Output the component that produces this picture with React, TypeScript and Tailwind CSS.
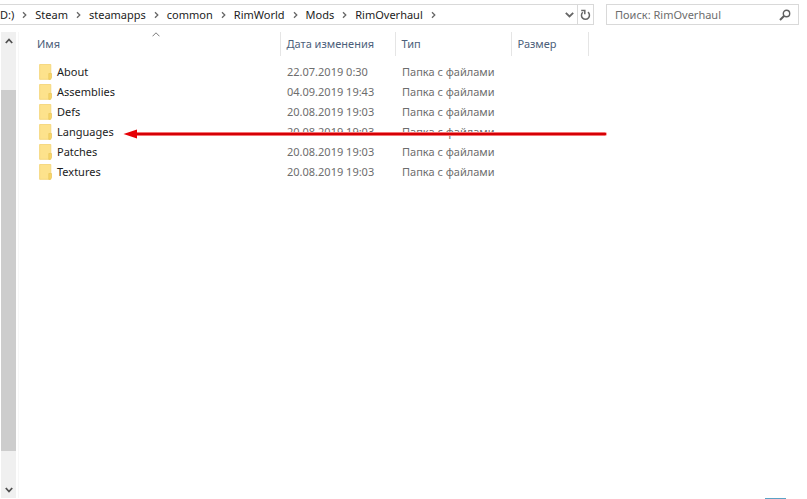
import React from 'react';

type FolderType = {
	name: string;
	date: string;
	marked?: boolean;
};

const path = ['D:)', 'Steam', 'steamapps', 'common', 'RimWorld', 'Mods', 'RimOverhaul'];

const folders: FolderType[] = [
	{name: 'About', date: '22.07.2019 0:30'},
	{name: 'Assemblies', date: '04.09.2019 19:43'},
	{name: 'Defs', date: '20.08.2019 19:03'},
	{name: 'Languages', date: '20.08.2019 19:03', marked: true},
	{name: 'Patches', date: '20.08.2019 19:03'},
	{name: 'Textures', date: '20.08.2019 19:03'},
];

function PathChevron() {
	return (
		<svg className="shrink-0" width="5" height="8" viewBox="0 0 5 8" fill="none" stroke="#666" strokeWidth="1.3">
			<path d="M1 1.2 3.8 4 1 6.8"/>
		</svg>
	);
}

function FolderIcon() {
	return (
		<svg className="shrink-0" width="13" height="16" viewBox="0 0 13 16">
			<path d="M0.6 0.5h11.200v14.800H0.600z" fill="#fde28c" stroke="#f5d67c" strokeWidth="0.9"/>
			<path d="M9.800 9.500h2.700v4.200l-1.200 1.600H9.800z" fill="#f7d568" stroke="#e9c55c" strokeWidth="0.7"/>
		</svg>
	);
}

function RedArrow() {
	return (
		<svg className="absolute left-[91px] top-[7px] z-10 pointer-events-none" width="484" height="10" viewBox="0 0 484 10">
			<path d="M12 5H482" stroke="#ff9a9a" strokeWidth="4" strokeLinecap="round"/>
			<path d="M12 5H482" stroke="#d50005" strokeWidth="2.4" strokeLinecap="round"/>
			<path d="M0.5 5 14 0.6V9.400z" fill="#e60006"/>
		</svg>
	);
}

function AddressBar() {
	return (
		<div className="flex h-[21px] flex-1 items-center border border-l-0 border-[#d9d9d9]">
			<nav className="flex flex-1 items-center gap-2 whitespace-nowrap">
				{path.map((item) => (
					<React.Fragment key={item}>
						<a href="#" className="text-[#1c1c1c]">{item}</a>
						<PathChevron/>
					</React.Fragment>
				))}
			</nav>
			<button type="button" aria-label="Предыдущие расположения" className="flex h-full w-4 items-center justify-center">
				<svg width="9" height="6" viewBox="0 0 9 6" fill="none" stroke="#666" strokeWidth="1.8">
					<path d="M0.8 0.8 4.5 4.5 8.2 0.8"/>
				</svg>
			</button>
			<button type="button" aria-label="Обновить" className="flex h-full w-4 items-center justify-center border-l border-[#d9d9d9]">
				<svg width="11" height="12" viewBox="0 0 11 12" fill="none" stroke="#666" strokeWidth="1.5">
					<path d="M8 3.2A4 4 0 1 1 2.8 3.3"/>
					<path d="M1.2 1.5H4.8V5.2"/>
				</svg>
			</button>
		</div>
	);
}

function SearchBox() {
	return (
		<div className="flex h-[21px] w-[193px] items-center border border-[#d9d9d9] pl-2 pr-[7px]">
			<input
				type="text"
				aria-label="Поиск"
				placeholder="Поиск: RimOverhaul"
				className="min-w-0 flex-1 bg-transparent outline-none placeholder:text-[#6d6d6d]"
			/>
			<svg width="12" height="12" viewBox="0 0 12 12" fill="none" stroke="#5f5f5f">
				<circle cx="7.5" cy="4.5" r="3.2" strokeWidth="1.4"/>
				<path d="M5 7 1 11" strokeWidth="1.9"/>
			</svg>
		</div>
	);
}

function ScrollBar() {
	return (
		<div className="ml-px flex w-[15px] flex-col bg-[#f0f0f0]">
			<button type="button" aria-label="Вверх" className="flex h-[17px] items-center justify-center">
				<svg width="8" height="6" viewBox="0 0 8 6" fill="none" stroke="#505050" strokeWidth="1.8">
					<path d="M0.8 5 4 1.5 7.2 5"/>
				</svg>
			</button>
			<div className="flex flex-1 flex-col pt-[41px] pb-[30px]">
				<div className="flex-1 bg-[#cdcdcd]"/>
			</div>
			<button type="button" aria-label="Вниз" className="flex h-[17px] items-center justify-center">
				<svg width="8" height="6" viewBox="0 0 8 6" fill="none" stroke="#505050" strokeWidth="1.8">
					<path d="M0.8 1 4 4.5 7.2 1"/>
				</svg>
			</button>
		</div>
	);
}

function FolderTable() {
	return (
		<table className="w-[556px] table-fixed text-left text-[#6d6d6d]">
			<thead className="text-[#4c607a]">
				<tr className="h-6">
					<th className="relative w-[248px] border-r border-[#e5e5e5] p-0 pl-[5px] font-normal">
						<svg className="absolute inset-x-0 top-0 mx-auto" width="8" height="5" viewBox="0 0 8 5" fill="none" stroke="#7a7a7a">
							<path d="M0.5 4.3 4 0.8 7.5 4.3"/>
						</svg>
						Имя
					</th>
					<th className="w-[115px] border-r border-[#e5e5e5] p-0 pl-[6px] font-normal">Дата изменения</th>
					<th className="w-[116px] border-r border-[#e5e5e5] p-0 pl-[6px] font-normal">Тип</th>
					<th className="w-[77px] border-r border-[#e5e5e5] p-0 pl-[6px] font-normal">Размер</th>
				</tr>
			</thead>
			<tbody className="before:block before:h-[6px]">
				{folders.map((folder) => (
					<tr key={folder.name} className="h-5">
						<td className="relative p-0 pl-[7px]">
							<div className="flex items-center gap-[5px] text-[#1c1c1c]">
								<FolderIcon/>
								{folder.name}
							</div>
							{folder.marked && <RedArrow/>}
						</td>
						<td className="p-0 pl-[7px]">{folder.date}</td>
						<td className="p-0 pl-[7px]">Папка с файлами</td>
						<td/>
					</tr>
				))}
			</tbody>
		</table>
	);
}

export default function App() {
	return (
		<div className="flex h-screen flex-col bg-white font-['Noto_Sans','Open_Sans',sans-serif] text-[11px] leading-4">
			<header className="flex gap-3 pt-1 pr-2">
				<AddressBar/>
				<SearchBox/>
			</header>
			<main className="flex flex-1 pt-[7px]">
				<ScrollBar/>
				<div className="ml-[2px] flex-1 border-l border-[#f7f7f7] pl-[13px]">
					<FolderTable/>
				</div>
			</main>
			<footer className="flex justify-end pr-[21px]">
				<div className="h-px w-[21px] bg-[#5ba3c6]"/>
			</footer>
		</div>
	);
}
